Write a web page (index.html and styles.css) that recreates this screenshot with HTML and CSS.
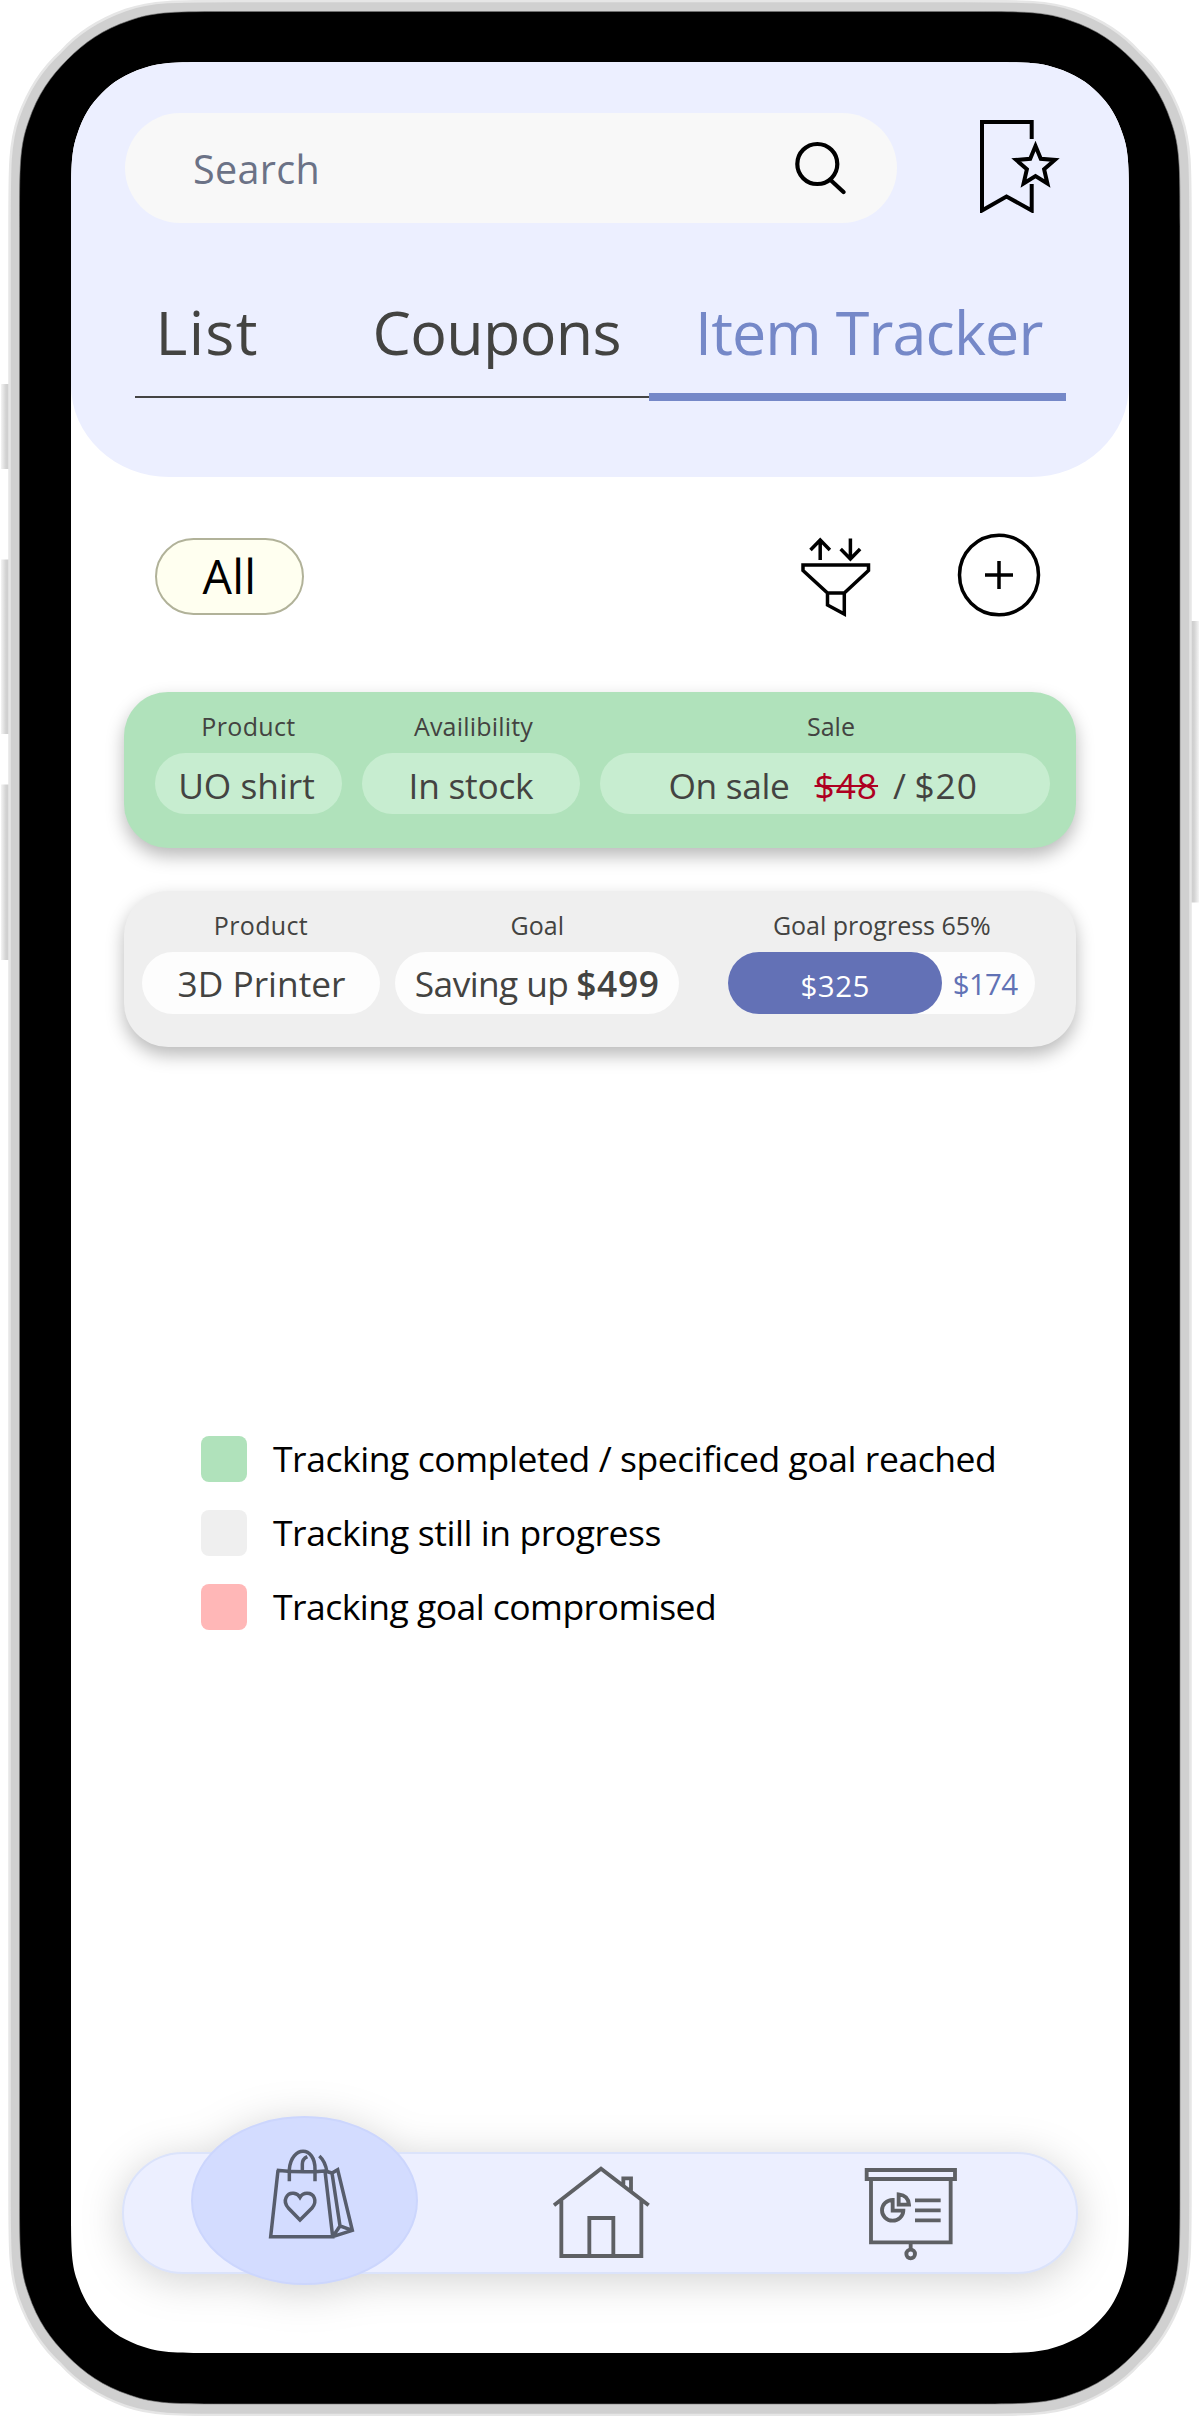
FILE: index.html
```html
<!DOCTYPE html>
<html lang="en">
<head>
<meta charset="utf-8">
<title>Item Tracker</title>
<link rel="stylesheet" href="styles.css">
</head>
<body>
<div class="phone">
  <svg class="phone-frame" viewBox="0 0 1200 2416" aria-hidden="true">
    <defs>
      <linearGradient id="keyLeft"><stop offset="0" stop-color="#f4f4f4"/><stop offset=".55" stop-color="#d2d2d2"/><stop offset="1" stop-color="#cccccc"/></linearGradient>
      <linearGradient id="keyRight"><stop offset="0" stop-color="#cccccc"/><stop offset=".45" stop-color="#d2d2d2"/><stop offset="1" stop-color="#f4f4f4"/></linearGradient>
    </defs>
    <g fill="url(#keyLeft)">
      <rect x="1" y="384" width="9" height="85"/>
      <rect x="1" y="559.5" width="9" height="174.5"/>
      <rect x="1" y="784.5" width="9" height="175.5"/>
    </g>
    <rect x="1190" y="621" width="9" height="281.500" fill="url(#keyRight)"/>
    <path class="rim" d="M9.500 229c0,-64 0,-86 9,-112c10,-28 23,-48 42,-65c17,-19 37,-32 65,-42c26,-9 48,-9 112,-9h725c64,0 86,0 112,9c28,10 48,23 65,42c19,17 32,37 42,65c9,26 9,48 9,112v1958c0,64 0,86 -9,112c-10,28 -23,48 -42,65c-17,19 -37,32 -65,42c-26,9 -48,9 -112,9h-725c-64,0 -86,0 -112,-9c-28,-10 -48,-23 -65,-42c-19,-17 -32,-37 -42,-65c-9,-26 -9,-48 -9,-112z"/>
    <path class="bezel" d="M19.500 226.500c0,-60 0,-80 9,-105c9,-27 22,-45 39,-62c17,-17 35,-30 62,-39c25,-9 45,-9 105,-9h730.500c60,0 80,0 105,9c27,9 45,22 62,39c17,17 30,35 39,62c9,25 9,45 9,105v1962.500c0,60 0,80 -9,105c-9,27 -22,45 -39,62c-17,17 -35,30 -62,39c-25,9 -45,9 -105,9h-730.500c-60,0 -80,0 -105,-9c-27,-9 -45,-22 -62,-39c-17,-17 -30,-35 -39,-62c-9,-25 -9,-45 -9,-105z"/>
  </svg>

  <div class="screen">
    <header class="header">
      <div class="search-row">
        <div class="search">
          <span>Search</span>
          <svg width="54" height="54" viewBox="0 0 54 54"><circle cx="25.300" cy="23" r="20"/><path d="M38.500 39L51.500 51"/></svg>
        </div>
        <svg class="saved" width="92" height="100" viewBox="0 0 92 100">
          <path d="M61.700 26V9H12v88.500L36.500 83.500 61.700 97.500V71"/>
          <path d="M65.500 33l5.300 12.800 14 1.100-10.700 9.300 3.300 14.300L65.500 63 53.600 70.500l3.300-14.300-10.700-9.300 14-1.100z"/>
        </svg>
      </div>
      <nav class="tabs">
        <a class="tab tab-list">List</a>
        <a class="tab tab-coupons">Coupons</a>
        <a class="tab tab-tracker">Item Tracker</a>
      </nav>
      <div class="rail"><span class="rail-rest"></span><span class="rail-active"></span></div>
    </header>

    <main class="main">
      <div class="toolbar">
        <button class="chip">All</button>
        <svg class="filter" width="80" height="90" viewBox="0 0 80 90">
          <path d="M26.200 29V8.500M16.500 19L26.200 9l9.700 10M56.400 7.500V28M46.700 18l9.700 10 9.700-10"/>
          <path d="M9 34h65.500v5.500L50.300 62H33.500L9 39.500zM33.500 62v12l16.800 9V62"/>
        </svg>
        <svg class="add" width="84" height="86" viewBox="0 0 84 86"><ellipse cx="42" cy="43" rx="39.500" ry="39.800"/><path d="M28 43h28M42 29v28"/></svg>
      </div>

      <section class="card card-done">
        <div class="field product"><span class="label">Product</span><span class="pill">UO shirt</span></div>
        <div class="field stock"><span class="label">Availibility</span><span class="pill">In stock</span></div>
        <div class="field sale"><span class="label">Sale</span><span class="pill"><span class="on-sale">On sale</span><s>$48</s><span class="slash">/</span><span class="price">$20</span></span></div>
      </section>

      <section class="card card-progress">
        <div class="field item"><span class="label">Product</span><span class="pill">3D Printer</span></div>
        <div class="field goal"><span class="label">Goal</span><span class="pill"><span>Saving up</span><b>$499</b></span></div>
        <div class="field progress"><span class="label">Goal progress 65%</span><span class="bar"><span class="saved-amount">$325</span><span class="left-amount">$174</span></span></div>
      </section>

      <ul class="legend">
        <li class="done">Tracking completed / specificed goal reached</li>
        <li class="going">Tracking still in progress</li>
        <li class="lost">Tracking goal compromised</li>
      </ul>

      <nav class="dock">
        <a class="dock-active">
          <svg width="110" height="110" viewBox="0 0 330 330">
            <path d="M50 91Q125 99 195 93L218 290H32L54 91M195 93L216 99 233 89 277 271 218 290M216 99L240 258 277 271M240 258L218 290"/>
            <path d="M88 124V88C94 16 166 16 165 88V124M127 95V72q0-15 15-22M178 48Q196 64 201 96"/>
            <path d="M120 240L85 204C65 180 82 158 101 160Q114 162 120 172 127 160 141 160C163 160 173 184 156 204Z"/>
          </svg>
        </a>
        <a class="dock-home">
          <svg width="120" height="110" viewBox="0 0 360 330"><path d="M42 151L183 41 326 151M64 137V303H304V137M148 303V189H220V303M250 90V70H273V108"/></svg>
        </a>
        <a class="dock-report">
          <svg width="120" height="115" viewBox="0 0 360 345">
            <path d="M35 45H300V72H35zM48 72V262H287V72M167 262V282"/><circle cx="167" cy="297" r="13"/>
            <path d="M113 135V167H145A32 31 0 1 1 113 135zM131 118V149H162Q160 121 131 118zM180 136h77M180 166h77M180 196h77"/>
          </svg>
        </a>
      </nav>
    </main>
  </div>
</div>
</body>
</html>
```
FILE: styles.css
```css
* { box-sizing: border-box; }

body {
  margin: 0;
  background: #fff;
  font-family: "Open Sans", "Noto Sans", sans-serif;
  color: #434341;
}

svg { display: block; flex: none; fill: none; }

.phone {
  position: relative;
  width: 1200px;
  height: 2416px;
  padding: 62px 71px 63px;
  overflow: hidden;
}

.phone-frame { position: absolute; inset: 0; width: 1200px; height: 2416px; }
.rim { fill: #d0d0d0; stroke: #e6e6e6; stroke-width: 2.5; }
.bezel { fill: #000; stroke: #777; stroke-width: .6; }

.screen {
  position: relative;
  width: 1058px;
  height: 2291px;
  display: flex;
  flex-direction: column;
  background: #fff;
  clip-path: path("M0,150c0,-42 0,-60 6,-77c6,-19 14,-31 25,-42c11,-11 23,-19 42,-25c17,-6 35,-6 77,-6h758c42,0 60,0 77,6c19,6 31,14 42,25c11,11 19,23 25,42c6,17 6,35 6,77v1991c0,42 0,60 -6,77c-6,19 -14,31 -25,42c-11,11 -23,19 -42,25c-17,6 -35,6 -77,6h-758c-42,0 -60,0 -77,-6c-19,-6 -31,-14 -42,-25c-11,-11 -19,-23 -25,-42c-6,-17 -6,-35 -6,-77z");
}

/* Header */
.header {
  height: 414.500px;
  padding: 51.300px 63px 0 53.500px;
  background: #ecefff;
  border-radius: 0 0 98px 98px / 0 0 92px 92px;
}

.search-row { display: flex; align-items: center; }

.search {
  width: 772px;
  height: 110px;
  padding: 0 51px 0 68.500px;
  display: flex;
  align-items: center;
  justify-content: space-between;
  border-radius: 55px;
  background: #f8f8f8;
  color: #6b7286;
  font-size: 39.500px;
  letter-spacing: .35px;
}

.search span { padding-top: 1px; }
.search svg { stroke: #000; stroke-width: 4.200; stroke-linecap: round; }
.saved { margin: 0 0 10px 73.500px; stroke: #000; stroke-width: 4; }

.tabs {
  display: grid;
  grid-template-columns: 216.500px 297.500px 1fr;
  align-items: center;
  height: 125.400px;
  margin: 44.500px 0 0 10px;
  padding-top: 3px;
  font-size: 61px;
  line-height: 80px;
  white-space: nowrap;
}

.tab-list { padding-left: 21px; letter-spacing: 1.300px; }
.tab-coupons { padding-left: 21.500px; letter-spacing: -.650px; }
.tab-tracker { padding-left: 46.500px; letter-spacing: -.900px; color: #7588c8; }

.rail { display: flex; align-items: center; margin-left: 10px; }
.rail-rest { width: 514px; height: 2.500px; background: #444; }
.rail-active { width: 417px; height: 8px; background: #7588c8; }

/* Content */
.main {
  flex: 1;
  display: flex;
  flex-direction: column;
  padding: 55px 51px 79px 53px;
}

.toolbar { display: flex; align-items: center; height: 88px; margin-bottom: 72px; }

.chip {
  width: 149px;
  height: 77px;
  margin: 1px 0 0 31px;
  padding: 0;
  border: 2.500px solid #b1b299;
  border-radius: 39px;
  background: #fffff0;
  color: #000;
  font: 46.600px/72px "Open Sans", sans-serif;
  letter-spacing: .3px;
}

.filter { margin-left: 490px; stroke: #000; stroke-width: 3.500; }
.add { margin: 0 0 1px 83.300px; stroke: #000; stroke-width: 3.500; }

.card {
  display: flex;
  width: 952px;
  height: 156px;
  margin-bottom: 43.500px;
  padding-top: 16px;
  border-radius: 44px;
  box-shadow: 0 8px 18px rgba(0, 0, 0, .28);
}

.field { display: flex; flex-direction: column; text-align: center; }

.label { margin-bottom: 9.500px; font-size: 25px; line-height: 36px; white-space: nowrap; }

.pill, .bar {
  display: flex;
  justify-content: center;
  align-items: center;
  height: 61px;
  border-radius: 31px;
  font-size: 35.300px;
  white-space: pre;
}

.card-done { padding-left: 31px; background: #b0e2bb; }
.card-done .pill { padding-top: 3px; background: #c7edd0; }
.product { width: 187px; }
.product .label, .item .label { letter-spacing: .35px; }
.product .pill { padding-right: 4px; }
.stock { width: 218px; margin-left: 20px; }
.stock .label { padding-left: 5px; letter-spacing: .2px; }
.stock .pill { letter-spacing: -.25px; }
.sale { width: 450px; margin-left: 20px; }
.sale .label { padding-left: 12px; }
.sale .pill { justify-content: flex-start; padding-left: 68.500px; }
.on-sale { width: 146px; text-align: left; letter-spacing: -.35px; }
.sale s { color: #ae0021; letter-spacing: 1px; text-decoration-thickness: 1.500px; }
.slash { margin: 0 8.500px 0 15px; }
.price { letter-spacing: .9px; }

.card-progress { height: 156px; margin-bottom: 389.400px; padding-left: 18px; background: #efefef; }
.card-progress .label { margin-bottom: 9px; }
.card-progress .pill, .bar { height: 62px; background: #fdfdfd; }
.card-progress .pill { padding-bottom: 1px; }
.item { width: 238px; }
.item .pill { padding-left: 1px; }
.goal { width: 284px; margin-left: 15.300px; }
.goal .pill { gap: 8px; letter-spacing: -.6px; }
.goal b { font-weight: 600; letter-spacing: .7px; }
.progress { width: 306.700px; margin-left: 48.700px; }
.progress .label { padding-left: 1px; }
.bar { justify-content: flex-start; font-size: 29.500px; letter-spacing: .5px; }

.saved-amount {
  width: 214.500px;
  height: 62px;
  padding-top: 2.500px;
  border-radius: 31px;
  background: #6371b6;
  color: #fff;
  line-height: 62px;
}

.left-amount { flex: 1; padding-right: 7px; color: #6172b5; letter-spacing: -.7px; }

/* Legend */
.legend {
  display: flex;
  flex-direction: column;
  gap: 28px;
  margin: 0 0 0 77px;
  padding: 0;
  list-style: none;
  color: #000;
  font-size: 35.500px;
  line-height: 44px;
  letter-spacing: -.440px;
  white-space: nowrap;
}

.legend li { display: flex; gap: 26px; height: 46px; }
.legend .lost { letter-spacing: -.530px; }
.legend li::before { content: ""; width: 46px; height: 46px; border-radius: 8px; background: #efefef; }
.legend .done::before { background: #b0e2bb; }
.legend .lost::before { background: #ffb7b7; }

/* Dock */
.dock {
  display: flex;
  align-items: flex-start;
  width: 956px;
  height: 122px;
  margin: auto 0 0 -2px;
  border: 2px solid #dbe3fb;
  border-radius: 61px;
  background: #ecefff;
  filter: drop-shadow(0 6px 20px rgba(0, 0, 0, .18));
}

.dock svg { stroke: #5e6064; stroke-width: 11.5; }

.dock-active {
  flex: none;
  width: 227px;
  height: 169px;
  margin: -38px 0 0 66.500px;
  padding: 22px 0 0 67px;
  border: 2px solid #ccd6fd;
  border-radius: 50%;
  background: #d3dcff;
}

.dock .dock-active svg { stroke: #575d6c; stroke-width: 10.5; }
.dock-home { margin: 1px 0 0 122.300px; }
.dock-report { margin: 1px 0 0 195px; }
```
